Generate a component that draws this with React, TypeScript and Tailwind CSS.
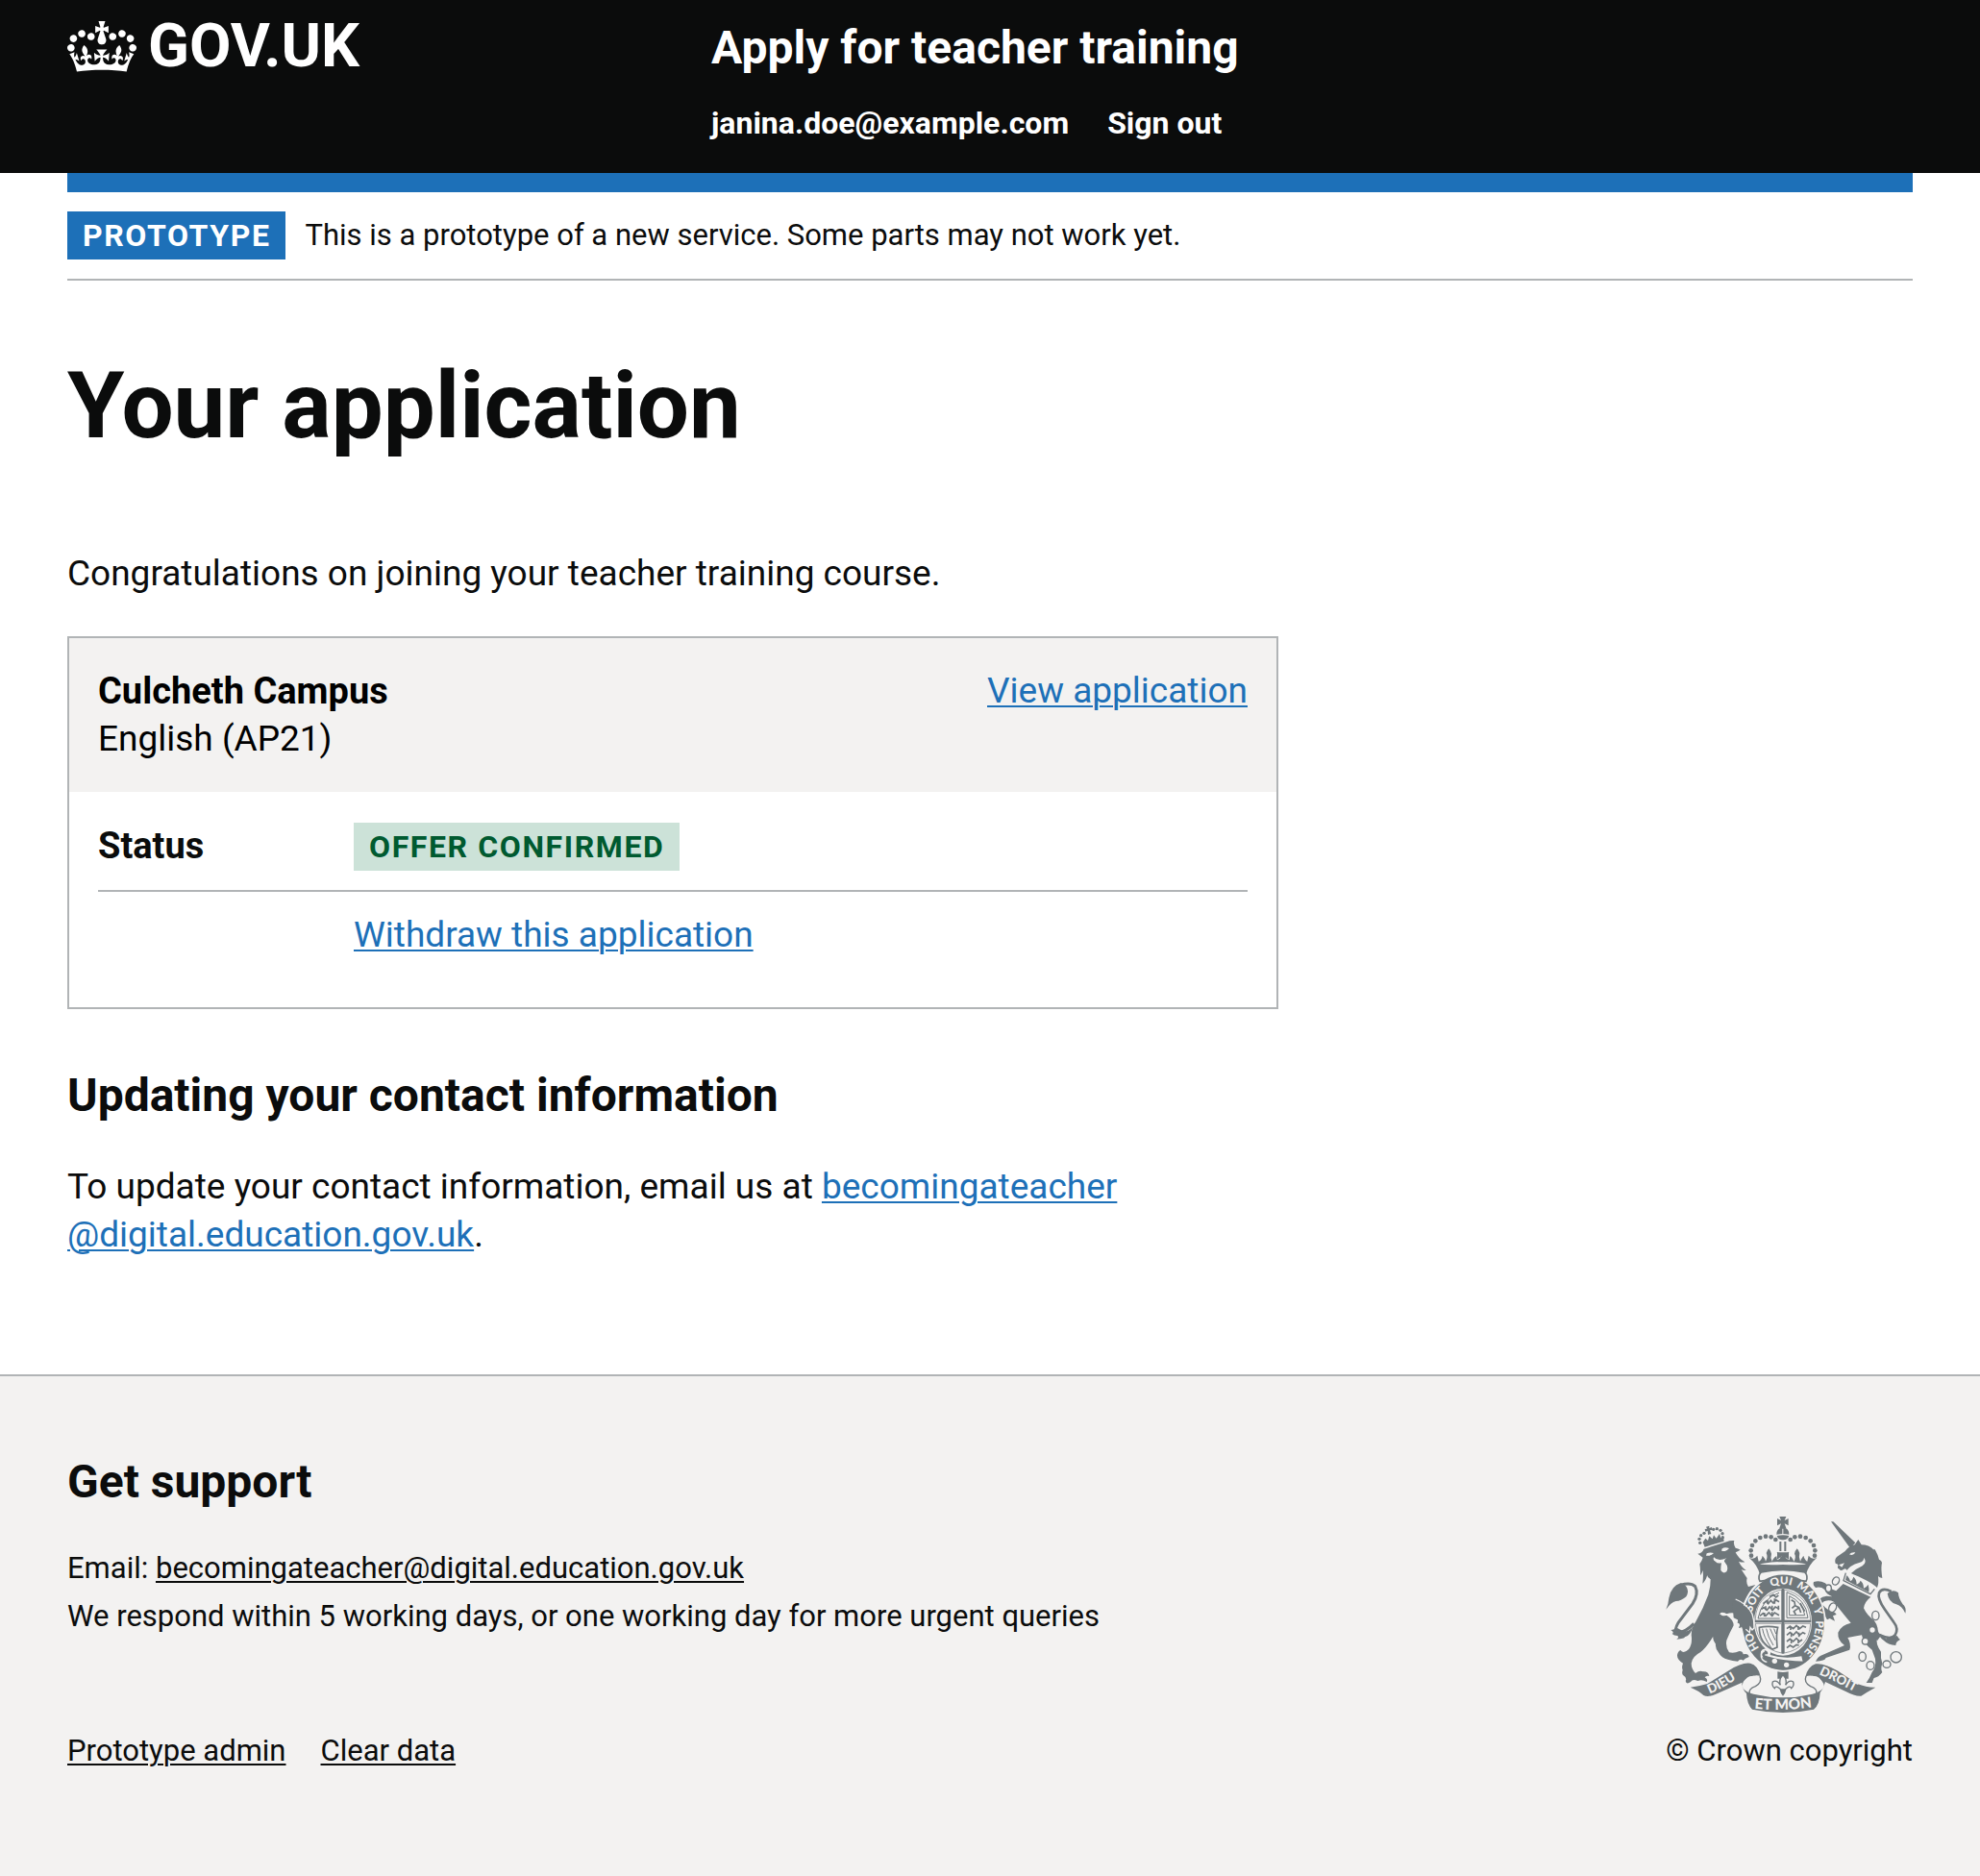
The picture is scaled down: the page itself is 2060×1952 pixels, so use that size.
import type { ReactNode } from "react";

function Crown() {
  return (
    <svg aria-hidden="true" viewBox="0 0 132 97" className="h-[53px] w-[72px] shrink-0" fill="currentColor">
      <path d="M25 30.2c3.5 1.5 7.7-.2 9.1-3.7 1.5-3.6-.2-7.8-3.9-9.2-3.6-1.4-7.6.3-9.1 3.9-1.4 3.5.3 7.5 3.9 9zM9 39.5c3.6 1.5 7.8-.2 9.2-3.7 1.5-3.6-.2-7.8-3.9-9.1-3.6-1.5-7.6.2-9.1 3.8-1.4 3.5.3 7.5 3.8 9zM4.4 57.2c3.5 1.5 7.7-.2 9.1-3.8 1.5-3.6-.2-7.7-3.9-9.1-3.5-1.5-7.6.3-9.1 3.8-1.4 3.5.3 7.6 3.9 9.1zm38.3-21.4c3.5 1.5 7.7-.2 9.1-3.8 1.5-3.6-.2-7.7-3.9-9.1-3.6-1.5-7.6.3-9.1 3.8-1.3 3.6.4 7.7 3.9 9.1zm64.4-5.6c-3.6 1.5-7.8-.2-9.1-3.7-1.5-3.6.2-7.8 3.8-9.2 3.6-1.4 7.7.3 9.2 3.9 1.3 3.5-.4 7.5-3.9 9zm15.9 9.3c-3.6 1.5-7.7-.2-9.1-3.7-1.5-3.6.2-7.8 3.7-9.1 3.6-1.5 7.7.2 9.2 3.8 1.5 3.5-.3 7.5-3.8 9zm4.7 17.7c-3.6 1.5-7.8-.2-9.2-3.8-1.5-3.6.2-7.7 3.9-9.1 3.6-1.5 7.7.3 9.2 3.8 1.3 3.5-.4 7.6-3.9 9.1zM89.3 35.8c-3.6 1.5-7.8-.2-9.2-3.8-1.4-3.6.2-7.7 3.9-9.1 3.6-1.5 7.7.3 9.2 3.8 1.4 3.6-.3 7.7-3.9 9.1zM69.7 17.7l8.9 4.7V9.3l-8.9 2.8c-.2-.3-.5-.6-.9-.9L72.4 0H59.6l3.5 11.2c-.3.3-.6.5-.9.9l-8.8-2.8v13.1l8.8-4.7c.3.3.6.7.9.9l-5 15.4v.1c-.2.8-.4 1.6-.4 2.4 0 4.1 3.1 7.5 7 8.1h.2c.3 0 .7.1 1 .1.4 0 .7 0 1-.1h.2c4-.6 7.1-4.1 7.1-8.1 0-.8-.1-1.7-.4-2.4V34l-5.1-15.4c.4-.2.7-.6 1-.9zM66 92.8c16.9 0 32.8 1.1 47.1 3.2 4-16.9 8.9-26.7 14-33.5l-9.6-3.4c1 4.9 1.1 7.2 0 10.2-1.5-1.4-3-4.3-4.2-8.7L108.6 76c2.8-2 5-3.2 7.5-3.3-4.4 9.4-10 11.9-13.6 11.2-4.3-.8-6.3-4.6-5.6-7.9 1-4.7 5.7-5.9 8-.5 4.3-8.7-3-11.4-7.6-8.8 7.1-7.2 7.9-13.5 2.1-21.1-8 6.1-8.1 12.3-4.5 20.8-4.7-5.4-12.1-2.5-9.5 6.2 3.4-5.2 7.9-2 7.2 3.1-.6 4.3-6.4 7.8-13.5 7.2-10.3-.9-10.9-8-11.2-13.8 2.5-.5 7.1 1.8 11 7.3L80.2 60c-4.1 4.4-8 5.3-12.3 5.4 1.4-4.4 8-11.6 8-11.6H55.5s6.4 7.2 7.9 11.6c-4.2-.1-8-1-12.3-5.4l1.4 16.4c3.9-5.5 8.5-7.7 10.9-7.3-.3 5.8-.9 12.8-11.1 13.8-7.2.6-12.9-2.9-13.5-7.2-.7-5 3.8-8.3 7.1-3.1 2.7-8.7-4.6-11.6-9.4-6.2 3.7-8.5 3.6-14.7-4.6-20.8-5.8 7.6-5 13.9 2.2 21.1-4.7-2.6-11.9.1-7.7 8.8 2.3-5.5 7.1-4.2 8.1.5.7 3.3-1.3 7.1-5.7 7.9-3.5.7-9-1.8-13.5-11.2 2.5.1 4.7 1.3 7.5 3.3l-4.7-15.4c-1.2 4.4-2.7 7.2-4.3 8.7-1.1-3-.9-5.3 0-10.2l-9.5 3.4c5 6.9 9.9 16.7 14 33.5 14.8-2.1 30.8-3.2 47.7-3.2z" />
    </svg>
  );
}

const INK = "#6f777b";
const PAPER = "#f3f2f1";

const CROWN_DOTS: [number, number][] = [
  [339, 176], [338, 160], [342, 144], [352, 130], [367, 120], [384, 116], [401, 118], [415, 126],
  [537, 176], [538, 160], [534, 144], [524, 130], [509, 120], [492, 116], [475, 118], [461, 126],
];
const SMALL_CROWN_DOTS: [number, number][] = [
  [179, 136], [177, 124], [182, 113], [192, 106], [250, 119], [249, 107], [243, 97], [232, 92], [221, 94],
];
const MOTTO: { word: string; arc: string }[] = [
  { word: "HO", arc: "M371 472A101 119 0 0 1 340 405" },
  { word: "SOIT", arc: "M340 363A101 119 0 0 1 390 280" },
  { word: "QUI", arc: "M392 279A101 119 0 0 1 475 273" },
  { word: "MAL", arc: "M472 271A101 119 0 0 1 531 336" },
  { word: "Y", arc: "M529 330A101 119 0 0 1 540 374" },
  { word: "PENSE", arc: "M539 365A101 119 0 0 1 492 486" },
];

function RoyalArms() {
  return (
    <svg role="img" aria-label="Royal coat of arms" viewBox="72 54 750 612" className="h-[204px] w-[250px]" fill={INK}>
      <defs>
        {MOTTO.map(({ word, arc }) => (
          <path key={word} id={`garter-${word}`} d={arc} />
        ))}
        <path id="scroll-left" d="M209 607Q250 592 325 540" />
        <path id="scroll-mid" d="M340 652Q438 663 538 648" />
        <path id="scroll-right" d="M550 546Q600 568 682 612" />
      </defs>

      {/* lion */}
      <path d="M188 134L194 149L254 131L252 117L244 121L240 108L230 122L222 112L218 124L208 115L204 129L196 122Z" />
      <path d="M198 86L208 83L208 90L216 87L218 96L210 97L214 108L204 111L203 99L196 101L194 93L201 92Z" />
      {SMALL_CROWN_DOTS.map(([x, y]) => (
        <circle key={`${x}-${y}`} cx={x} cy={y} r="5" />
      ))}
      <path d="M172 170Q186 168 191 155L262 133Q272 128 286 129Q282 139 290 152Q298 154 305 158Q296 163 290 166Q300 186 319 196Q309 198 300 194Q308 212 323 222Q314 223 308 219Q320 238 326 246Q322 262 330 273L352 267Q331 288 318 318Q310 330 322 342Q338 365 344 388Q346 402 336 413Q330 408 325 413Q320 402 311 410Q310 398 301 401Q306 390 299 386Q303 376 286 371Q294 361 302 360Q280 350 262 358Q251 350 241 355Q250 362 262 362Q284 376 284 394Q270 420 262 440Q258 462 270 478Q286 482 302 474Q312 474 314 484Q330 480 332 492Q318 497 314 503Q304 496 297 506Q280 505 266 500Q246 496 238 480Q226 466 228 452Q218 440 220 428Q200 462 180 478Q156 490 152 512Q152 530 165 543Q178 533 188 538Q206 537 208 552Q198 550 194 556Q205 562 200 570Q186 562 172 567Q156 560 150 570Q136 580 134 567Q139 557 127 550Q121 545 125 533Q121 524 126 512Q108 500 108 488Q108 477 118 471Q128 484 144 468Q156 452 152 424Q152 400 166 382Q190 340 205 298Q212 275 212 250Q200 243 202 236Q196 256 187 263Q190 240 188 222Q184 234 180 238Q181 218 178 202Q186 190 188 182Z" />
      <path d="M198 176Q214 178 222 168Q210 164 200 169ZM247 162Q262 164 270 153Q256 148 247 155ZM222 181Q236 196 262 184Q252 190 256 196Q270 212 262 226Q252 234 244 222Q244 208 246 199Q234 202 227 194Q218 190 222 181ZM240 358Q252 350 266 360Q258 366 248 363Z" fill={PAPER} />
      <path d="M73 344Q80 330 82 308Q90 270 118 262Q126 260 136 272Q146 286 136 304Q120 318 104 318Q88 322 73 344Z" />
      <path d="M118 268Q150 258 164 272Q176 296 156 326L112 384Q98 408 106 414Q128 420 160 388" fill="none" stroke={INK} strokeWidth="9" />
      <path d="M88 408Q100 408 104 400L124 410Q142 418 158 396Q148 428 132 430Q130 436 106 437Q116 430 108 426Q98 426 92 420Q100 416 88 408Z" />

      {/* unicorn */}
      <path d="M588 70L595 70L664 136L648 153Z" />
      <path d="M602 200Q598 188 606 180L632 162Q644 146 662 142L673 126L683 142Q706 142 722 158Q720 152 726 158Q734 172 738 188Q750 194 746 204Q744 220 748 246Q738 244 735 240Q738 262 732 276Q718 262 688 248Q656 234 640 226Q636 214 628 218Q618 226 614 218Q606 216 610 208Q612 202 602 200Z" />
      <path d="M645 172Q652 164 664 166Q658 178 645 172ZM635 226Q646 206 676 198Q692 194 690 182Q702 196 686 208Q664 218 650 232ZM612 205L630 199L622 212Z" fill={PAPER} />
      <path d="M635 230L726 282L712 301L624 258Z" fill={PAPER} />
      <path d="M634 230L627 254L711 296L724 280" fill="none" stroke={INK} strokeWidth="4" />
      <path d="M633 252Q636 244 636 238Q644 242 648 256Q656 252 658 242Q668 250 668 266Q678 262 680 254Q690 262 690 278Q698 276 704 266Q708 280 706 290Z" />
      <path d="M626 264L712 305Q692 320 690 340Q700 362 722 378Q740 400 732 430Q726 452 744 476Q742 496 748 512Q742 530 748 540Q736 556 722 558L716 573H698Q708 560 716 540Q730 524 726 498L716 470Q688 450 684 424Q664 428 640 432Q652 452 646 470L572 495Q570 505 540 506Q546 492 556 488L630 456Q608 440 610 416Q620 392 650 386Q628 360 606 332Q598 316 580 316Q560 318 560 328Q570 340 584 348Q600 350 605 360L594 364L600 380L584 372L576 376L568 362Q556 346 546 326Q546 306 574 302L592 304Q572 296 568 282Q556 272 540 276Q530 268 534 258Q552 252 570 262Q584 280 604 286Z" />
      <path d="M722 378L728 396L742 428L732 442L710 414Z" />
      <path d="M764 294Q782 278 798 292Q798 308 812 328Q824 338 820 356Q810 334 792 328Q768 322 764 294Z" />
      <path d="M776 288Q748 274 738 292Q732 310 756 344L784 384Q800 404 788 424Q776 440 740 424" fill="none" stroke={INK} strokeWidth="8" />
      <path d="M734 416Q752 424 760 436Q780 430 794 426Q800 436 804 438Q790 444 790 456Q766 454 752 440Q742 434 734 416Z" />
      <g fill={PAPER} stroke={INK} strokeWidth="4">
        <ellipse cx="603" cy="255" rx="10" ry="13" transform="rotate(30 603 255)" />
        <ellipse cx="580" cy="278" rx="9" ry="11" />
        <ellipse cx="593" cy="338" rx="11" ry="15" transform="rotate(25 593 338)" />
        <ellipse cx="727" cy="363" rx="11" ry="14" />
        <ellipse cx="717" cy="408" rx="10" ry="10" />
        <ellipse cx="695" cy="443" rx="10" ry="10" />
        <ellipse cx="686" cy="491" rx="11" ry="14" />
        <ellipse cx="711" cy="519" rx="12" ry="13" />
        <ellipse cx="762" cy="515" rx="12" ry="11" />
        <circle cx="791" cy="493" r="17" />
      </g>

      {/* garter and shield */}
      <ellipse cx="439" cy="385" rx="133" ry="152" fill={PAPER} />
      <ellipse cx="439" cy="385" rx="128" ry="148" />
      <ellipse cx="438" cy="383" rx="90" ry="105" fill={PAPER} />
      <path d="M352 372Q356 300 434 282V378H352ZM442 282Q520 300 524 378H442ZM352 388H434V480Q360 466 352 388ZM442 388H524Q520 466 442 480Z" fill="none" stroke={INK} strokeWidth="2" />
      <path d="M372 493Q360 470 384 466Q404 470 398 486Q440 500 496 490L500 508Q440 520 388 500Z" fill={PAPER} />
      <path d="M376 494Q366 478 382 472Q396 476 388 490Q440 506 510 506Q470 532 436 532Q402 528 376 512Q366 504 376 494Z" />
      <path d="M380 474Q368 478 370 492Q374 506 388 508M382 486H394" fill="none" stroke={PAPER} strokeWidth="4" />
      <circle cx="412" cy="505" r="8" fill={PAPER} />
      <circle cx="449" cy="517" r="8" fill={PAPER} />
      <path d="M434 279H442V378H526V385H442V482H434V385H350V378H434Z" />
      <g fill="none" stroke={INK} strokeWidth="5">
        <path d="M426 292Q372 310 360 372H428M450 290V370H516Q510 310 450 290M458 302V362H506Q500 322 458 302" strokeWidth="3" />
        <path d="M376 326l10-8 6 8 8-10 8 8 8-10 10 6M370 344l8-6 10 8 8-10 10 10 8-10 12 6M366 364l10-8 8 8 10-10 10 10 8-10 14 8M396 304l12-6 8 8 8-6" />
        <path d="M450 404l10-8 10 8 10-10 10 10 10-8 10 4M450 424l10-8 10 8 10-10 10 10 10-8 8 4M450 444l10-8 10 8 10-10 10 10 8-6M450 464l10-8 10 6 10-8 8 2" />
        <path d="M390 314v12M412 310v16M384 334v12M404 332v16M424 332v14M380 354v12M404 352v14M462 396v12M486 396v12M464 416v14M488 416v14M464 438v12M486 438v12" />
        <path d="M464 314l10 6 2 12 12 6 6 16M478 330l-12 10M486 340l-14 10 6 10M492 324l6 12 8 14" />
        <path d="M364 400Q390 394 422 400Q416 420 420 462L406 468Q364 450 364 400Z" />
        <path d="M374 404Q378 430 400 462M386 404Q390 428 408 456M398 404L414 440M410 404L416 420" strokeWidth="3" />
      </g>
      <g fill={PAPER} fontFamily="Lato, sans-serif" fontWeight="900" fontSize="35" textAnchor="middle">
        {MOTTO.map(({ word }) => (
          <text key={word}>
            <textPath href={`#garter-${word}`} startOffset="50%">{word}</textPath>
          </text>
        ))}
      </g>
      {/* the lion's forepaw rests on the garter */}
      <path d="M280 318Q318 322 336 352Q348 374 347 398L341 404L336 396L332 413L322 402L314 411L309 398L300 402L306 388L296 386L298 374L284 370Z" />
      <path d="M290 312Q326 326 342 358Q349 378 348 402L342 408L336 400L334 416L322 406" fill="none" stroke={PAPER} strokeWidth="4" />

      {/* central crown */}
      <path d="M366 236Q360 206 332 182Q348 190 358 176L362 194Q372 190 374 176Q382 184 384 194Q392 180 386 168Q388 160 394 154Q400 162 402 170Q398 182 404 194Q410 180 418 178L420 190Q430 186 434 178Q428 172 418 166H458Q448 172 444 178Q446 186 458 190L460 178Q466 180 472 194Q480 180 474 170Q476 160 482 154Q488 160 490 168Q486 182 492 194Q496 184 502 176Q506 190 514 194L518 176Q528 190 544 182Q516 206 510 236Q438 218 366 236Z" />
      <path d="M366 202Q438 186 510 202Q500 206 438 204Q380 206 366 202Z" fill={PAPER} />
      <path d="M370 228Q438 212 506 228Q518 240 510 256L496 254Q438 222 380 254L366 256Q358 240 370 228Z" fill={PAPER} stroke={INK} strokeWidth="5" />
      {CROWN_DOTS.map(([x, y]) => (
        <circle key={`${x}-${y}`} cx={x} cy={y} r="7" />
      ))}
      <path d="M427 54H448L443 66L455 60V82L443 76L448 90H427L432 76L420 82V60L432 66Z" />
      <path d="M418 110Q418 90 434 89H441Q457 90 457 110Q438 106 418 110ZM419 114Q438 110 457 114Q452 128 438 127Q424 128 419 114Z" />
      <path d="M427 132H433V162H427ZM442 132H448V162H442Z" />
      <path d="M420 164L434 174V184L422 196H454L442 184V174L456 164V188L448 182H428L420 188Z" />
      <path d="M436 92H439V108H436Z" fill={PAPER} />

      {/* scroll and motto */}
      <path d="M149 587Q176 584 202 576L270 534Q310 508 336 512Q360 518 368 552Q350 546 328 558Q308 568 312 588Q320 602 346 608Q438 630 530 608Q560 600 566 584Q566 566 542 556Q524 546 508 554Q516 522 540 514Q566 510 610 536L670 576Q700 588 727 587Q700 602 682 614Q664 616 634 600L570 570Q566 590 554 604Q552 644 534 656Q438 676 342 656Q326 640 324 606Q310 592 310 572L234 606Q206 620 190 612Q176 598 149 587Z" />
      <path d="M317 576Q318 560 334 553Q352 548 362 556Q366 570 350 582Q334 592 340 602Q322 596 317 576ZM560 576Q559 560 542 553Q524 548 514 556Q510 570 526 582Q542 592 536 602Q556 596 560 576Z" fill={PAPER} />
      <path d="M366 552Q374 572 352 584Q330 592 334 606M510 552Q502 572 524 584Q546 592 542 606" fill="none" stroke={INK} strokeWidth="4" />
      <g fill={PAPER} fontFamily="Lato, sans-serif" fontWeight="900">
        <text fontSize="40"><textPath href="#scroll-left">DIEU</textPath></text>
        <text fontSize="46" textAnchor="middle"><textPath href="#scroll-mid" startOffset="50%">ET MON</textPath></text>
        <text fontSize="40"><textPath href="#scroll-right">DROIT</textPath></text>
      </g>
      <path d="M421 538Q438 542 455 538V560H421Z" />
      <path d="M438 548Q452 562 446 580Q458 562 470 570Q474 582 464 590Q460 582 452 588L444 594H432L424 588Q416 582 412 590Q402 582 406 570Q418 562 430 580Q424 562 438 548Z" fill={PAPER} stroke={INK} strokeWidth="4" />
      <path d="M428 594H448L444 606L438 614L432 606Z" />
    </svg>
  );
}

const LINK = "underline decoration-2 underline-offset-[3px] ";

function Tag({ tone, children }: { tone: "blue" | "green"; children: ReactNode }) {
  const colours = tone === "blue" ? "bg-[#1d70b8] text-white" : "bg-[#cce2d8] text-[#005a30]";
  return (
    <strong className={`inline-block px-4 text-[32px] leading-[50px] font-bold tracking-wider uppercase ${colours}`}>
      {children}
    </strong>
  );
}

export default function App() {
  return (
    <div className="flex min-h-screen flex-col bg-white font-['Roboto',sans-serif] text-[37px] leading-[50px] text-[#0b0c0c]">
      <header className="bg-[#0b0c0c] px-[70px] pt-5 pb-8 text-white">
        <div className="flex items-start">
          <a href="#home" className="flex w-1/3 items-center gap-3">
            <Crown />
            <span className="text-[63px] leading-14 font-bold">GOV.UK</span>
          </a>
          <div className="flex-1 pl-[30px] font-bold">
            <a href="#service" className="block text-5xl leading-[60px]">
              Apply for teacher training
            </a>
            <nav aria-label="Account" className="mt-7 flex gap-10 text-[32px] leading-10">
              <a href="#account">janina.doe@example.com</a>
              <a href="#sign-out">Sign out</a>
            </nav>
          </div>
        </div>
      </header>

      <div className="mx-[70px] border-t-20 border-[#1d70b8]">
        <div className="flex items-center gap-5 border-b-2 border-[#b1b4b6] py-5">
          <Tag tone="blue">Prototype</Tag>
          <p className="text-[31px]">This is a prototype of a new service. Some parts may not work yet.</p>
        </div>
      </div>

      <main className="px-[70px] py-20">
        <h1 className="mb-[100px] text-8xl leading-[100px] font-bold">Your application</h1>
        <div className="max-w-[1260px]">
          <p>Congratulations on joining your teacher training course.</p>

          <section aria-labelledby="course" className="mt-10 border-2 border-[#b1b4b6]">
            <div className="flex justify-between bg-[#f3f2f1] p-[30px] text-black">
              <div>
                <h3 id="course" className="text-[38px] font-bold">Culcheth Campus</h3>
                <p>English (AP21)</p>
              </div>
              <a href="#view" className={LINK + "text-[#1d70b8]"}>View application</a>
            </div>
            <dl className="px-[30px] pt-8 pb-[30px]">
              <div className="flex items-start border-b-2 border-[#b1b4b6] pb-5">
                <dt className="w-[266px] text-[38px] leading-[48px] font-bold">Status</dt>
                <dd className="flex"><Tag tone="green">Offer confirmed</Tag></dd>
              </div>
              <div className="flex py-5">
                <dt className="w-[266px]" />
                <dd>
                  <a href="#withdraw" className={LINK + "text-[#1d70b8]"}>Withdraw this application</a>
                </dd>
              </div>
            </dl>
          </section>

          <h2 className="mt-[60px] mb-10 text-5xl leading-[60px] font-bold">Updating your contact information</h2>
          <p className="mb-10">
            To update your contact information, email us at{" "}
            <a href="mailto:becomingateacher@digital.education.gov.uk" className={LINK + "text-[#1d70b8]"}>
              becomingateacher
              <wbr />
              @digital.education.gov.uk
            </a>
            .
          </p>
        </div>
      </main>

      <footer className="flex grow items-end justify-between border-t-2 border-[#b1b4b6] bg-[#f3f2f1] px-[70px] pt-20 pb-[110px] text-[31px] leading-10">
        <div>
          <h2 className="mb-10 text-5xl leading-[60px] font-bold">Get support</h2>
          <ul className="mb-[100px] flex flex-col gap-[10px]">
            <li>
              Email:{" "}
              <a href="mailto:becomingateacher@digital.education.gov.uk" className={LINK}>
                becomingateacher@digital.education.gov.uk
              </a>
            </li>
            <li>We respond within 5 working days, or one working day for more urgent queries</li>
          </ul>
          <nav aria-label="Support links" className="flex gap-9">
            <a href="#admin" className={LINK}>Prototype admin</a>
            <a href="#clear" className={LINK}>Clear data</a>
          </nav>
        </div>
        <a href="#copyright" className="flex flex-col gap-5">
          <RoyalArms />
          <span>© Crown copyright</span>
        </a>
      </footer>
    </div>
  );
}
